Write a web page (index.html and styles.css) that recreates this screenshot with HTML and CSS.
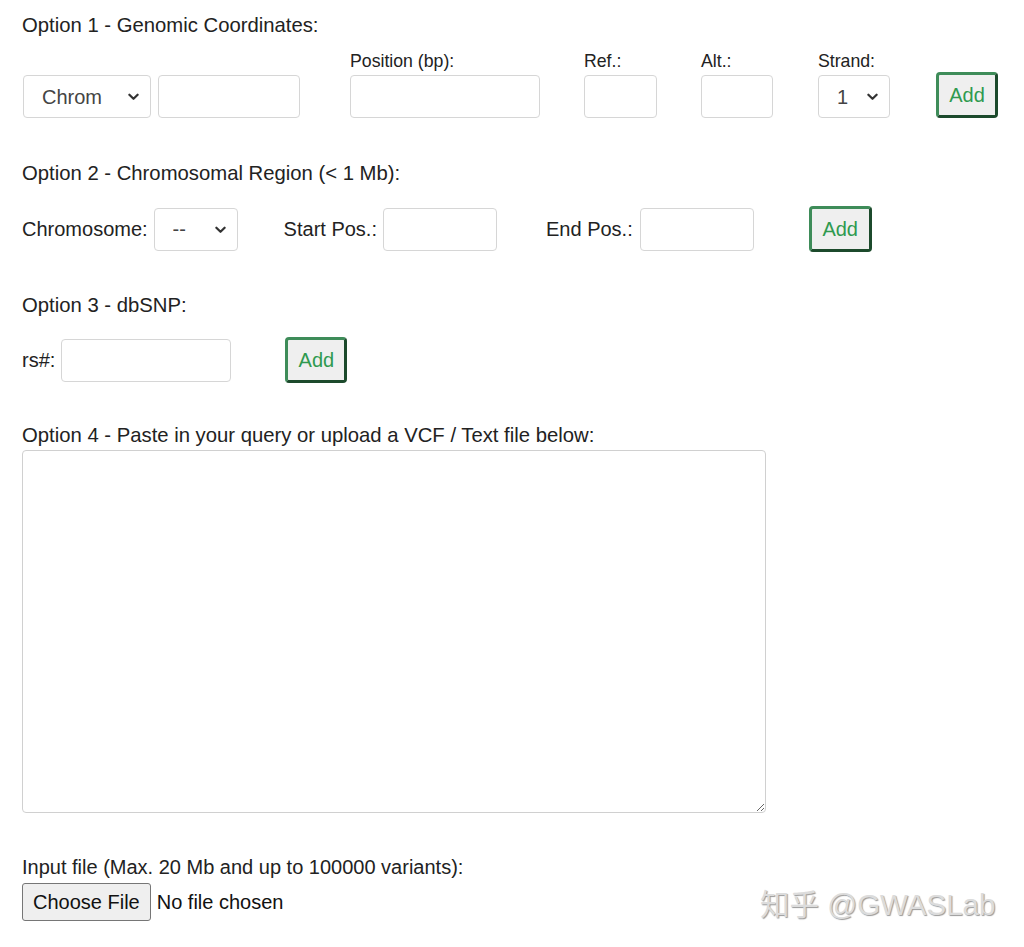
FILE: index.html
```html
<!DOCTYPE html>
<html lang="en">
<head>
  <meta charset="UTF-8">
  <title>Variant Query</title>
  <link rel="stylesheet" href="styles.css">
</head>
<body>
  <div class="page">
    <form id="form-query">
      <!-- Option 1 -->
      <h4 class="opt-title">Option 1 - Genomic Coordinates:</h4>
      <div class="row row-coords">
        <div class="field">
          <span class="select-wrap w-chrom">
            <select id="chrom">
              <option>Chrom</option>
            </select>
            <svg class="chev" viewBox="0 0 12 8"><path d="M1.5 1.5 L6 6 L10.5 1.5" /></svg>
          </span>
        </div>
        <div class="field"><input type="text" class="w-chrom-txt"></div>
        <div class="field f-pos">
          <label>Position (bp):</label>
          <input type="text" class="w-pos">
        </div>
        <div class="field f-ref">
          <label>Ref.:</label>
          <input type="text" class="w-small">
        </div>
        <div class="field f-alt">
          <label>Alt.:</label>
          <input type="text" class="w-alt">
        </div>
        <div class="field f-strand">
          <label>Strand:</label>
          <span class="select-wrap w-alt">
            <select id="strand">
              <option>1</option>
              <option>-1</option>
            </select>
            <svg class="chev" viewBox="0 0 12 8"><path d="M1.5 1.5 L6 6 L10.5 1.5" /></svg>
          </span>
        </div>
        <button type="button" class="btn-add f-add">Add</button>
      </div>

      <!-- Option 2 -->
      <h4 class="opt-title">Option 2 - Chromosomal Region (&lt; 1 Mb):</h4>
      <div class="row row-region">
        <span class="inline-label">Chromosome:</span>
        <span class="select-wrap w-chr">
          <select id="chromosome">
            <option>--</option>
          </select>
          <svg class="chev" viewBox="0 0 12 8"><path d="M1.5 1.5 L6 6 L10.5 1.5" /></svg>
        </span>
        <span class="inline-label l-start">Start Pos.:</span>
        <input type="text" class="w-range">
        <span class="inline-label l-end">End Pos.:</span>
        <input type="text" class="w-range">
        <button type="button" class="btn-add b-region">Add</button>
      </div>

      <!-- Option 3 -->
      <h4 class="opt-title">Option 3 - dbSNP:</h4>
      <div class="row row-rs">
        <span class="inline-label">rs#:</span>
        <input type="text" class="w-rs">
        <button type="button" class="btn-add b-rs">Add</button>
      </div>

      <!-- Option 4 -->
      <h4 class="opt-title t-paste">Option 4 - Paste in your query or upload a VCF / Text file below:</h4>
      <textarea id="query"></textarea>

      <div class="upload">
        <div class="upload-label">Input file (Max. 20 Mb and up to 100000 variants):</div>
        <input type="file" id="arquivo">
      </div>
    </form>
  </div>
  <div class="watermark">知乎 @GWASLab</div>
</body>
</html>
```

FILE: styles.css
```css
body { font-family: "Liberation Sans", Arial, sans-serif; color: #222; background: #fff; margin: 0; padding: 0; position: relative; min-height: 947px; }
.page { padding: 13px 0 0 22px; }
form { margin: 0; }
.opt-title { font-size: 20.3px; font-weight: normal; line-height: 24px; margin: 0; }
.row { display: flex; align-items: flex-end; }
.row-coords { margin-top: 13px; }
.row-region { margin-top: 21px; align-items: center; }
.row-rs { margin-top: 20px; align-items: center; }
.row-coords + .opt-title { margin-top: 43px; }
.row-region + .opt-title { margin-top: 41px; }
.row-rs + .opt-title { margin-top: 40px; }

.field { display: flex; flex-direction: column; }
.field label { font-size: 17.7px; line-height: 22px; margin-bottom: 3px; margin-left: 0; }
.field + .field { margin-left: 7px; }
.f-pos { margin-left: 50px !important; }
.f-ref, .f-alt { margin-left: 44px !important; }
.f-strand { margin-left: 45px !important; }
.f-add { margin-left: 46px; }

input[type=text], select, textarea {
  font-family: "Liberation Sans", Arial, sans-serif;
  box-sizing: border-box;
  border: 1px solid #d6d6d6;
  border-radius: 4px;
  background: #fff;
  height: 43px;
  margin: 0;
}
input[type=text] { padding: 0 8px; font-size: 18px; }
.select-wrap { position: relative; display: inline-block; }
.select-wrap select { -webkit-appearance: none; appearance: none; width: 100%; font-size: 20px; color: #444; padding: 0 0 0 18px; }
.select-wrap .chev { position: absolute; right: 12px; top: 18px; width: 11px; height: 8px; pointer-events: none; }
.chev path { fill: none; stroke: #333; stroke-width: 2.4; stroke-linecap: round; stroke-linejoin: round; }

.w-chrom { width: 128px; margin-left: 1px; }
.w-chrom-txt { width: 142px; }
.w-pos { width: 190px; }
.w-small { width: 73px; }
.w-alt { width: 72px; }
.w-chr { width: 84px; margin-left: 6px; }
.w-range { width: 114px; }
.w-rs { width: 170px; margin-left: 6px !important; }

.inline-label { font-size: 20px; line-height: 24px; }
.l-start { margin-left: 46px; margin-right: 6px; }
.l-end { margin-left: 49px; margin-right: 7px; }

.btn-add {
  width: 63px;
  height: 46px;
  padding: 0;
  font-family: "Liberation Sans", Arial, sans-serif;
  font-size: 20px;
  color: #2f9a4f;
  background: #efefef;
  border: 3px solid;
  border-color: #3e8c59 #1c4a2c #1c4a2c #3e8c59;
  border-radius: 4px;
  cursor: pointer;
}
.f-add { width: 62px; }
.b-region { margin-left: 55px; }
.b-rs { margin-left: 54px; width: 62px; }

.t-paste { margin-bottom: 3px; }
textarea { display: block; width: 744px; height: 363px; border-color: #d0d0d0; resize: vertical; padding: 6px; font-size: 16px; }

.upload { margin-top: 42px; }
.upload-label { font-size: 20px; line-height: 24px; margin-bottom: 4px; }
input[type=file] { font-family: "Liberation Sans", Arial, sans-serif; font-size: 20px; color: #111; }
input[type=file]::file-selector-button {
  font-family: "Liberation Sans", Arial, sans-serif;
  font-size: 20px;
  height: 38px;
  padding: 0 10px;
  margin-right: 6px;
  background: #efefef;
  color: #111;
  border: 1px solid #767676;
  border-radius: 3px;
}

.watermark {
  position: absolute;
  left: 760px;
  top: 881px;
  font-family: "Liberation Sans", "Noto Sans CJK SC", sans-serif;
  font-size: 29.5px;
  color: #dcdcdc;
  text-shadow: 1px 1px 1px #9a9a9a;
  white-space: nowrap;
}
```
